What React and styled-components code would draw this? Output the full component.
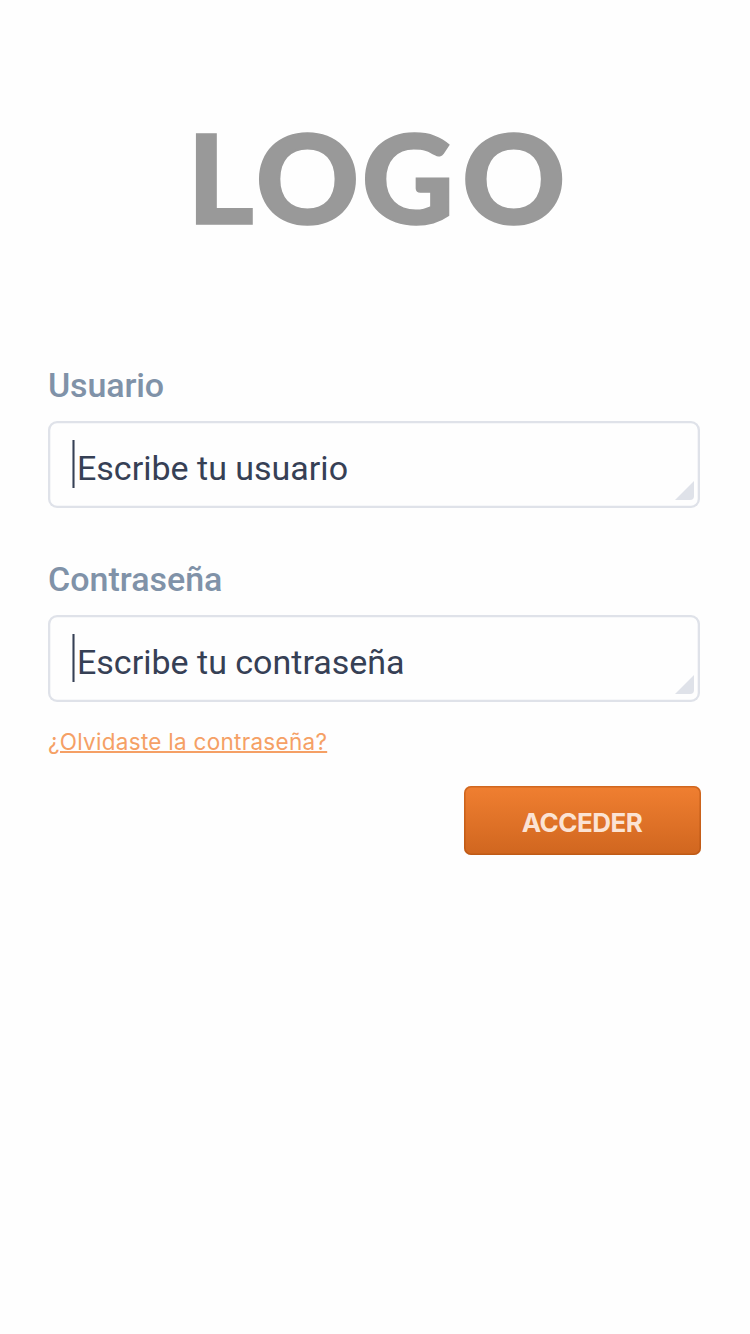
import React from 'react';
import styled, { createGlobalStyle } from 'styled-components';

const GlobalStyle = createGlobalStyle`
  * { box-sizing: border-box; }
  body { margin: 0; background: #fefefe; font-family: Roboto, "Liberation Sans", sans-serif; }
`;

const Page = styled.main`
  width: 750px;
  height: 1334px;
  padding: 90px 49px 0 48px;
  display: flex;
  flex-direction: column;
  background: #fefefe;
`;

const Logo = styled.svg`
  display: block;
  width: 420px;
  height: 180px;
  margin-left: 132px;
  flex: none;
  overflow: visible;
  fill: #999;
  stroke: #999;
  stroke-width: 1.6px;
  font-family: Lato, sans-serif;
  font-weight: 900;
  font-size: 124.5px;
`;

const Form = styled.form`
  margin-top: 95px;
  display: flex;
  flex-direction: column;
`;

const Field = styled.label`
  display: flex;
  flex-direction: column;
  margin-bottom: 52px;
  height: 142px;
`;

const Label = styled.span`
  height: 40px;
  line-height: 40px;
  margin-bottom: 16px;
  font-size: 34px;
  font-weight: 500;
  color: #8092a8;
  letter-spacing: ${(p) => p.$spacing}px;
`;

const InputBox = styled.span`
  position: relative;
  display: flex;
  align-items: flex-start;
  width: 652px;
  height: 87px;
  padding: 19px 24px;
  border-radius: 9px;
  background: #fefefe;
  box-shadow: inset 0 0 0 2.3px #dfe2e9;
`;

const Caret = styled.span`
  width: 3px;
  height: 48px;
  margin-right: 2px;
  background: linear-gradient(90deg, #9197a2 1px, #364055 1px 2px, #9197a2 2px);
`;

const Value = styled.span`
  line-height: 56px;
  font-size: 34px;
  color: #364055;
`;

const Grip = styled.svg`
  position: absolute;
  right: 6px;
  bottom: 8px;
  width: 19px;
  height: 19px;
  fill: #dfe2e9;
`;

const Forgot = styled.a`
  align-self: flex-start;
  margin-top: -25px;
  height: 28px;
  line-height: 28px;
  font-family: Inter, sans-serif;
  font-size: 22.5px;
  letter-spacing: 0.28px;
  color: #f5a065;
  text-decoration: underline;
  text-decoration-thickness: 2px;
  text-underline-offset: 1px;
`;

const Submit = styled.button`
  align-self: flex-end;
  width: 237px;
  height: 69px;
  margin: 30px 0 0;
  padding: 4px 1px 0 0;
  border: 0;
  border-radius: 7px;
  background: linear-gradient(#f07f31, #d0661f);
  box-shadow: inset 0 0 0 1.6px rgba(170, 75, 10, 0.45);
  font: 700 26px/1 Inter, sans-serif;
  letter-spacing: -0.5px;
  color: #fbe3d4;
`;

function TextField({ label, labelSpacing, value }) {
  return (
    <Field>
      <Label $spacing={labelSpacing}>{label}</Label>
      <InputBox>
        <Caret />
        <Value>{value}</Value>
        <Grip viewBox="0 0 19 19"><path d="M19 0V15Q19 19 15 19H0Z" /></Grip>
      </InputBox>
    </Field>
  );
}

export default function App() {
  return (
    <>
      <GlobalStyle />
      <Page>
        <Logo viewBox="0 0 420 180" role="img" aria-label="LOGO">
          <text transform="scale(1.03 1)" x="6.7 73.3 176.3 273.5" y="133.8">LOGO</text>
        </Logo>
        <Form>
          <TextField label="Usuario" labelSpacing={-0.15} value="Escribe tu usuario" />
          <TextField label="Contraseña" labelSpacing={0} value="Escribe tu contraseña" />
          <Forgot>¿Olvidaste la contraseña?</Forgot>
          <Submit type="button">ACCEDER</Submit>
        </Form>
      </Page>
    </>
  );
}
